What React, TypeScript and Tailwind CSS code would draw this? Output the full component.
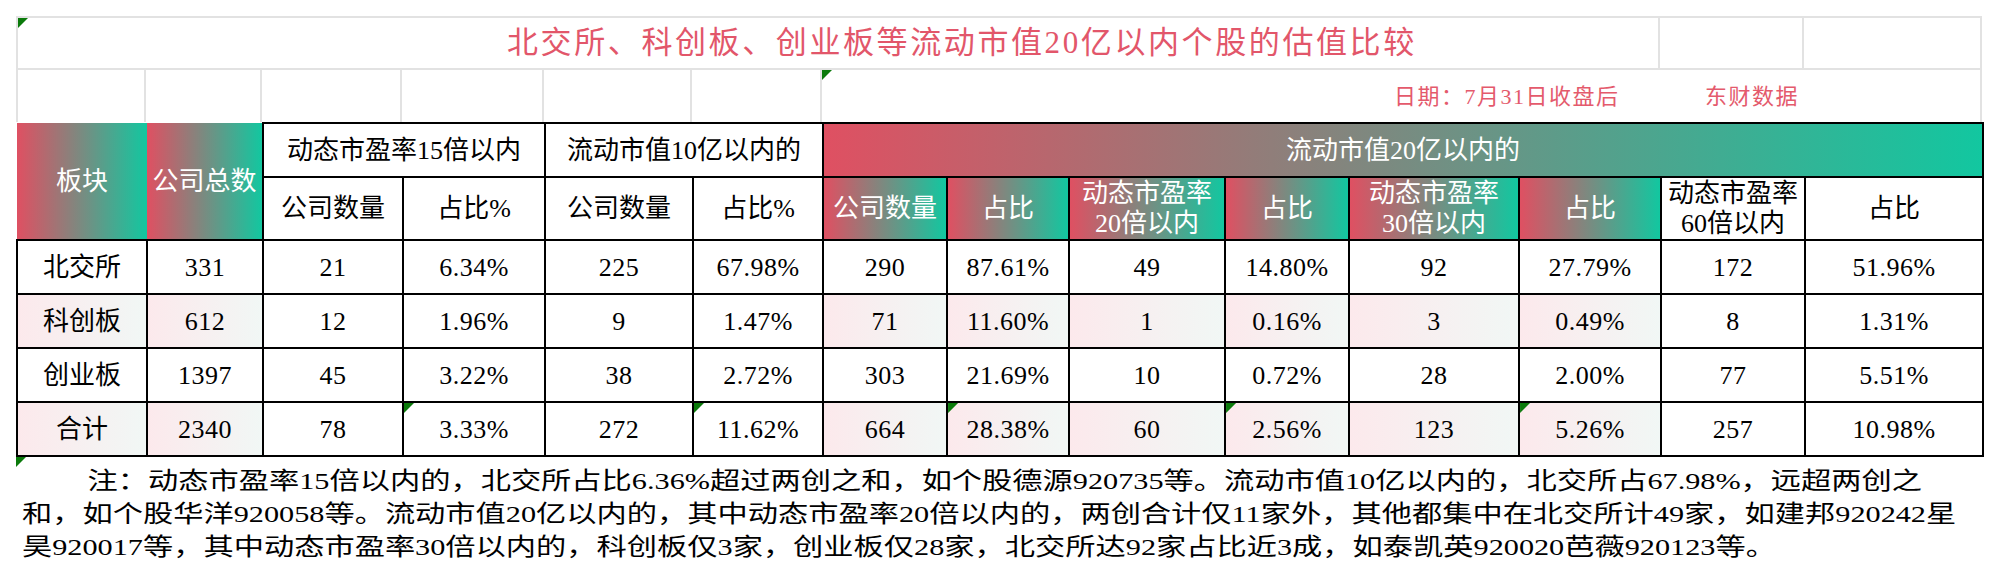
const grad = "bg-linear-to-r/srgb from-[#df5062] to-[#12c7a0] text-white";
const soft = "bg-linear-to-r/srgb from-[#fce9ec] to-[#f1f7f5]";
const gray = "border-[#e2e2e2]";

const Tri = () => (
  <span className="absolute left-0 top-0 h-[10px] w-[10px] bg-[#0b7a0b] [clip-path:polygon(0_0,100%_0,0_100%)]" />
);

const widths = [130, 116, 140, 142, 148, 130, 124, 122, 156, 124, 170, 142, 144, 178];

const rows = [
  { name: "北交所", vals: ["331", "21", "6.34%", "225", "67.98%", "290", "87.61%", "49", "14.80%", "92", "27.79%", "172", "51.96%"], tint: false, tri: false },
  { name: "科创板", vals: ["612", "12", "1.96%", "9", "1.47%", "71", "11.60%", "1", "0.16%", "3", "0.49%", "8", "1.31%"], tint: true, tri: false },
  { name: "创业板", vals: ["1397", "45", "3.22%", "38", "2.72%", "303", "21.69%", "10", "0.72%", "28", "2.00%", "77", "5.51%"], tint: false, tri: false },
  { name: "合计", vals: ["2340", "78", "3.33%", "272", "11.62%", "664", "28.38%", "60", "2.56%", "123", "5.26%", "257", "10.98%"], tint: true, tri: true },
];

// columns (by index incl. 板块 = 0) that get the pale gradient in tinted rows
const tintCols = [0, 1, 6, 7, 8, 9, 10, 11];
const triCols = [3, 5, 7, 9, 11];

const App = () => {
  return (
    <div className="h-[577px] w-[1998px] overflow-hidden bg-white pl-4 pt-4 font-['Liberation_Serif','Noto_Sans_CJK_SC',serif] text-black">
      <div className="w-[1966px]">
        {/* title row */}
        <div className={`flex h-[54px] border-x-2 border-y-2 ${gray}`}>
          <div className={`relative flex w-[1642px] items-center border-r-2 ${gray} pl-[489px] text-[31px] tracking-[2.6px] text-[#e2566a]`}>
            <Tri />
            北交所、科创板、创业板等流动市值20亿以内个股的估值比较
          </div>
          <div className={`w-[144px] border-r-2 ${gray}`} />
          <div className="flex-1" />
        </div>

        {/* date row */}
        <div className={`flex h-[52px] border-x-2 ${gray}`}>
          <div className={`w-[128px] border-r-2 ${gray}`} />
          <div className={`w-[116px] border-r-2 ${gray}`} />
          <div className={`w-[140px] border-r-2 ${gray}`} />
          <div className={`w-[142px] border-r-2 ${gray}`} />
          <div className={`w-[148px] border-r-2 ${gray}`} />
          <div className={`w-[130px] border-r-2 ${gray}`} />
          <div className="relative flex flex-1 items-center pl-[572px] text-[22px] tracking-[1.5px] text-[#e45a6c]">
            <Tri />
            <span className="w-[311px]">日期：7月31日收盘后</span>
            <span>东财数据</span>
          </div>
        </div>

        {/* main table */}
        <table className="w-[1966px] table-fixed border-collapse text-[26px]">
          <colgroup>
            {widths.map((w, i) => (
              <col key={i} style={{ width: w }} />
            ))}
          </colgroup>
          <thead>
            <tr className="h-[54px]">
              <th rowSpan={2} className={`font-normal ${grad}`}>板块</th>
              <th rowSpan={2} className={`font-normal whitespace-nowrap ${grad}`}>公司总数</th>
              <th colSpan={2} className="border-2 border-black font-normal">动态市盈率15倍以内</th>
              <th colSpan={2} className="border-2 border-black font-normal">流动市值10亿以内的</th>
              <th colSpan={8} className={`border-2 border-black font-normal ${grad}`}>流动市值20亿以内的</th>
            </tr>
            <tr className="h-[63px] leading-[30px]">
              <th className="border-2 border-black font-normal">公司数量</th>
              <th className="border-2 border-black font-normal">占比%</th>
              <th className="border-2 border-black font-normal">公司数量</th>
              <th className="border-2 border-black font-normal">占比%</th>
              <th className={`border-2 border-black font-normal whitespace-nowrap ${grad}`}>公司数量</th>
              <th className={`border-2 border-black font-normal ${grad}`}>占比</th>
              <th className={`border-2 border-black font-normal ${grad}`}>动态市盈率<br />20倍以内</th>
              <th className={`border-2 border-black font-normal ${grad}`}>占比</th>
              <th className={`border-2 border-black font-normal ${grad}`}>动态市盈率<br />30倍以内</th>
              <th className={`border-2 border-black font-normal ${grad}`}>占比</th>
              <th className="border-2 border-black font-normal">动态市盈率<br />60倍以内</th>
              <th className="border-2 border-black font-normal">占比</th>
            </tr>
          </thead>
          <tbody>
            {rows.map((r) => (
              <tr key={r.name} className="h-[54px]">
                {[r.name, ...r.vals].map((v, i) => (
                  <td
                    key={i}
                    className={`relative border-2 border-black text-center ${i > 0 ? "tracking-[0.5px]" : ""} ${r.tint && tintCols.includes(i) ? soft : ""}`}
                  >
                    {r.tri && triCols.includes(i) && <Tri />}
                    {v}
                  </td>
                ))}
              </tr>
            ))}
          </tbody>
        </table>

        {/* note */}
        <div className="relative pt-[8px]">
          <Tri />
          <div className="ml-[6px] origin-left scale-x-[1.26] whitespace-nowrap text-[24px] leading-[33px]">
            <div className="pl-[52px]">注：动态市盈率15倍以内的，北交所占比6.36%超过两创之和，如个股德源920735等。流动市值10亿以内的，北交所占67.98%，远超两创之</div>
            <div>和，如个股华洋920058等。流动市值20亿以内的，其中动态市盈率20倍以内的，两创合计仅11家外，其他都集中在北交所计49家，如建邦920242星</div>
            <div>昊920017等，其中动态市盈率30倍以内的，科创板仅3家，创业板仅28家，北交所达92家占比近3成，如泰凯英920020芭薇920123等。</div>
          </div>
        </div>
      </div>
    </div>
  );
};

export default App;
